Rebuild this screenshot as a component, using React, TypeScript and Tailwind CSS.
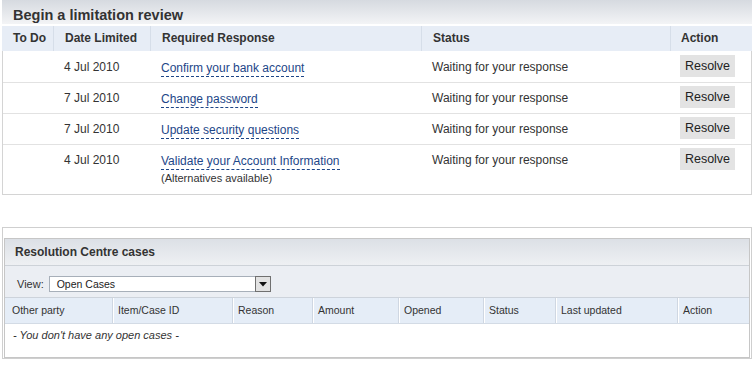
import React from "react";

const rows = [
  { date: "4 Jul 2010", resp: "Confirm your bank account" },
  { date: "7 Jul 2010", resp: "Change password" },
  { date: "7 Jul 2010", resp: "Update security questions" },
  { date: "4 Jul 2010", resp: "Validate your Account Information", alt: true },
];

const caseCols = [
  { label: "Other party", w: "w-[107px]", first: true },
  { label: "Item/Case ID", w: "w-[120px]" },
  { label: "Reason", w: "w-[80px]" },
  { label: "Amount", w: "w-[86px]" },
  { label: "Opened", w: "w-[85px]" },
  { label: "Status", w: "w-[72px]" },
  { label: "Last updated", w: "w-[122px]" },
  { label: "Action", w: "flex-1" },
];

export default function App() {
  return (
    <div className="w-[756px] h-[368px] bg-white font-['Liberation_Sans',Arial,sans-serif] text-[#333]">
      {/* Limitation review */}
      <div className="ml-[2px] w-[750px]">
        <div className="h-[24px] bg-linear-to-b from-[#d6dae0] to-[#f3f4f6] pl-[11px] pt-[7px] text-[14.5px] font-bold leading-[17px] text-[#333] overflow-visible whitespace-nowrap">
          Begin a limitation review
        </div>
        <div className="h-[2px] bg-white" />
        <div className="grid grid-cols-[51px_97px_271px_249px_1fr] h-[25px] bg-[#e7edf6] text-[12px] font-bold leading-[25px] text-[#333]">
          <div className="pl-[11px]">To Do</div>
          <div className="pl-[11px] border-l border-[#d6dee9]">Date Limited</div>
          <div className="pl-[11px] border-l border-[#d6dee9]">Required Response</div>
          <div className="pl-[11px] border-l border-[#d6dee9]">Status</div>
          <div className="pl-[10px] border-l border-[#d6dee9]">Action</div>
        </div>
        <div className="border-x border-b border-[#d4d4d4] pt-px">
          {rows.map((r, i) => (
            <div
              key={i}
              className={
                "grid grid-cols-[50px_97px_271px_249px_1fr] text-[12px] " +
                (r.alt ? "h-[49px]" : "h-[31px] border-b border-[#e2e2e2]")
              }
            >
              <div />
              <div className="pl-[11px] pt-[7px] leading-[16px]">{r.date}</div>
              <div className="pl-[11px] pt-[7px]">
                <span className="inline-block leading-[16px] text-[#1d4688] border-b border-dashed border-[#1d4688]">
                  {r.resp}
                </span>
                {r.alt && (
                  <div className="text-[11px] leading-[14px] mt-[1px] text-[#333]">(Alternatives available)</div>
                )}
              </div>
              <div className="pl-[11px] pt-[7px] leading-[16px]">Waiting for your response</div>
              <div className="pl-[10px] pt-[3px]">
                <div className="w-[55px] h-[22px] bg-[#e3e3e3] text-center leading-[22px] text-[12.5px] text-[#222]">
                  Resolve
                </div>
              </div>
            </div>
          ))}
        </div>
      </div>

      {/* Resolution centre */}
      <div className="ml-[2px] mt-[32px] w-[750px] border border-[#cfcfcf] pt-[10px] px-[1px]">
        <div className="border border-[#c6c6c6]">
          <div className="h-[27px] bg-linear-to-b from-[#dce0e6] to-[#eef0f3] border-b border-[#cdd2d8] pl-[10px] text-[12px] font-bold leading-[27px] text-[#333]">
            Resolution Centre cases
          </div>
          <div className="h-[32px] bg-[#ebeef3] border-b border-[#cdd3db] flex items-start pt-[10px] pl-[12px]">
            <span className="text-[11px] leading-[16px] text-[#333]">View:</span>
            <div className="ml-[5px] w-[222px] h-[16px] bg-white border border-[#a7afb9] flex items-center">
              <span className="flex-1 pl-[7px] text-[10.5px] leading-[14px] text-[#222]">Open Cases</span>
              <div className="w-[16px] h-[16px] -mr-px bg-[#e2e2e2] border border-[#707070] flex items-center justify-center">
                <svg width="8" height="5" viewBox="0 0 8 5">
                  <path d="M0 0 H8 L4 4.5 Z" fill="#111" />
                </svg>
              </div>
            </div>
          </div>
          <div className="flex h-[26px] bg-[#e5edf7] border-b border-[#d3dbe5] text-[10.5px] leading-[25px] text-[#333]">
            {caseCols.map((c, i) => (
              <div
                key={i}
                className={
                  c.w +
                  " " +
                  (c.first ? "pl-[7px]" : "pl-[5px] border-l border-[#cfd7e2] shadow-[inset_1px_0_0_#ffffff]")
                }
              >
                {c.label}
              </div>
            ))}
          </div>
          <div className="h-[33px] pl-[8px] pt-[5px] text-[11px] italic leading-[13px] text-[#333]">
            - You don't have any open cases -
          </div>
        </div>
      </div>
    </div>
  );
}
